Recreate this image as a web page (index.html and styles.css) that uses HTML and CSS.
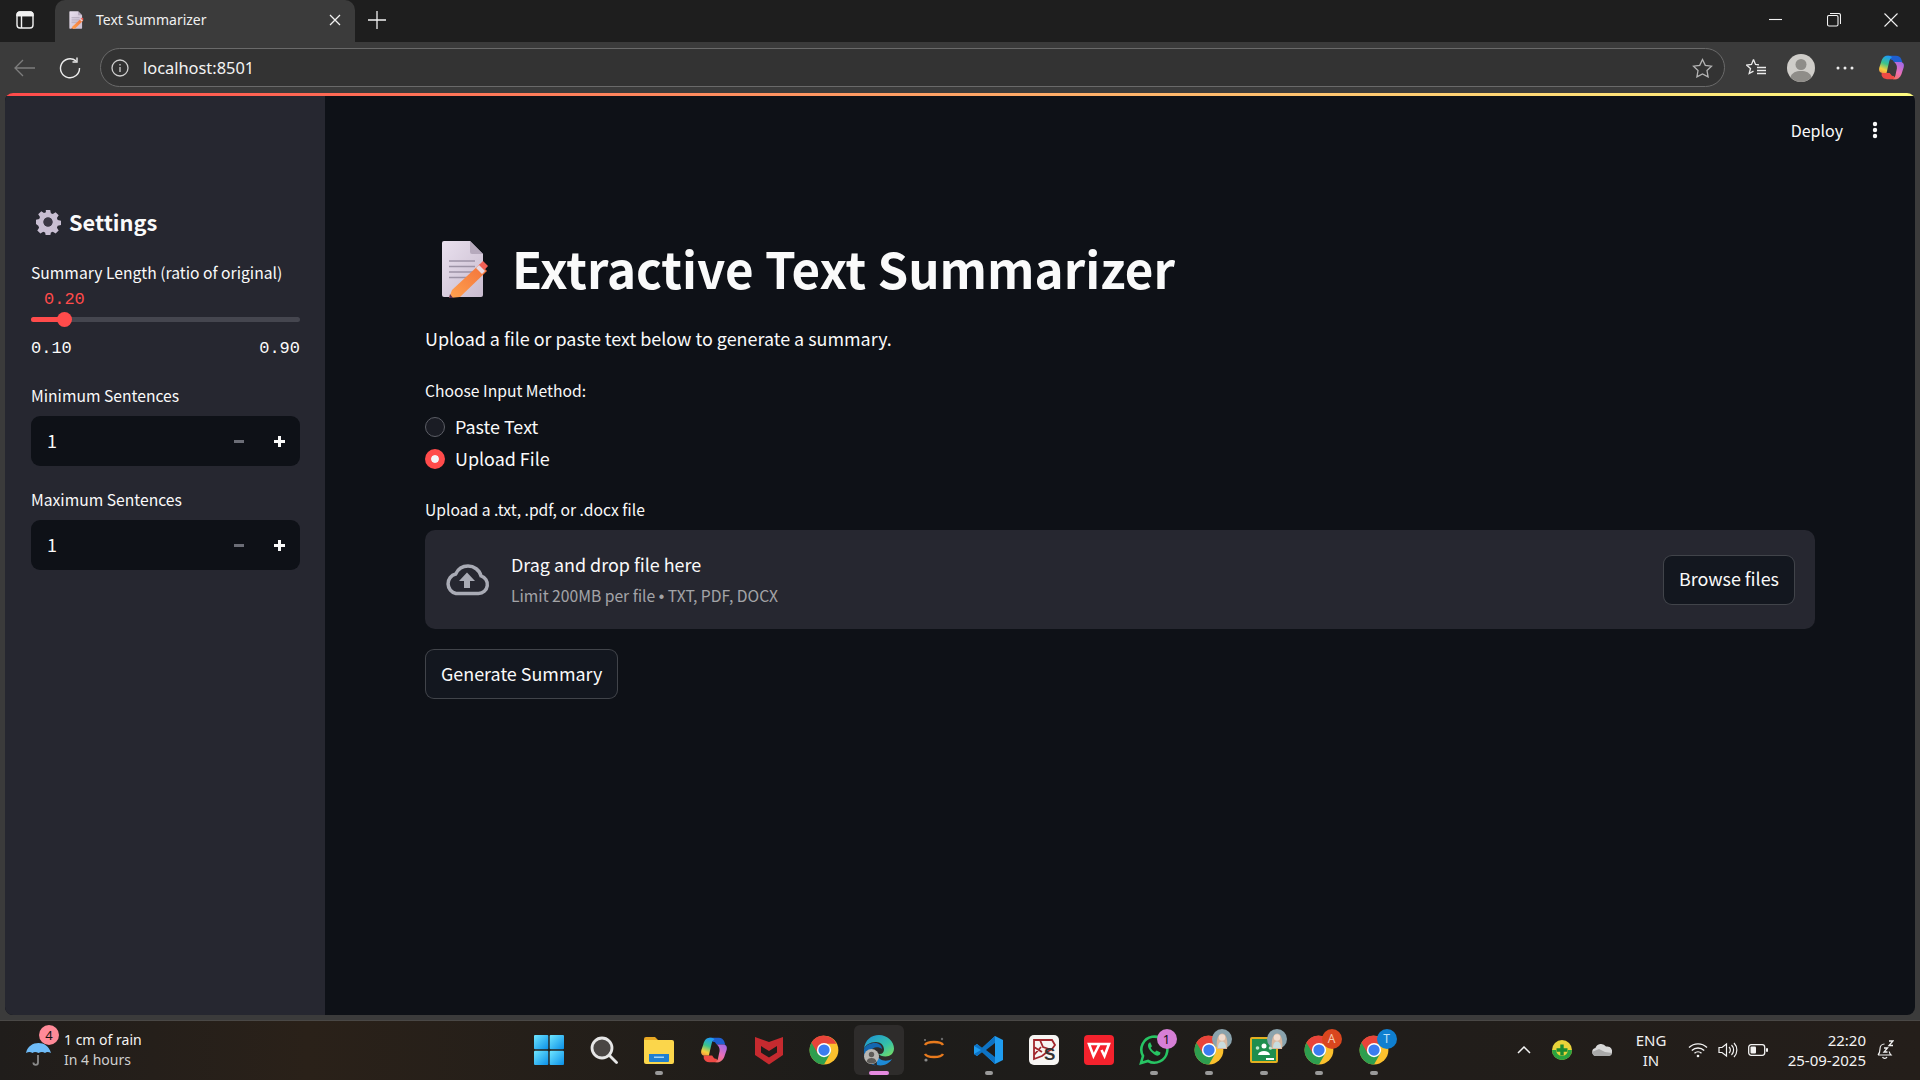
FILE: index.html
```html
<!DOCTYPE html>
<html lang="en">
<head>
<meta charset="utf-8">
<title>Text Summarizer</title>
<link rel="stylesheet" href="styles.css">
</head>
<body>
<svg class="defs" width="0" height="0" aria-hidden="true">
  <defs>
    <linearGradient id="paper" x1="0" y1="0" x2="1" y2="1"><stop offset="0" stop-color="#e9e0ee"/><stop offset="1" stop-color="#c9bccf"/></linearGradient>
    <linearGradient id="pencil" x1="0" y1="1" x2="1" y2="0"><stop offset="0" stop-color="#ffa24f"/><stop offset="1" stop-color="#f2703a"/></linearGradient>
    <linearGradient id="cop" x1=".6" y1="0" x2=".3" y2="1"><stop offset="0" stop-color="#1f9cf5"/><stop offset=".45" stop-color="#3cc48a"/><stop offset=".8" stop-color="#f6d03e"/><stop offset="1" stop-color="#f6a03e"/></linearGradient>
    <linearGradient id="cop2" x1=".7" y1="0" x2=".3" y2="1"><stop offset="0" stop-color="#a06ae8"/><stop offset=".6" stop-color="#ea70b8"/><stop offset="1" stop-color="#f2706a"/></linearGradient>
    <linearGradient id="win" x1="0" y1="0" x2="1" y2="1"><stop offset="0" stop-color="#6fe6ff"/><stop offset="1" stop-color="#0a8fe8"/></linearGradient>
    <linearGradient id="edge" x1="0" y1="0" x2="1" y2="1"><stop offset="0" stop-color="#1b8fd8"/><stop offset=".6" stop-color="#35c1a8"/><stop offset="1" stop-color="#7fe05a"/></linearGradient>
    <symbol id="doc" viewBox="0 0 48 58">
      <path d="M3 1h26l13 13v41a2 2 0 0 1-2 2H3a2 2 0 0 1-2-2V3a2 2 0 0 1 2-2z" fill="url(#paper)"/>
      <path d="M29 1l13 13H31a2 2 0 0 1-2-2z" fill="#b6aabd"/>
      <path d="M8 21h26M8 26.500h26M8 32h26M8 37.500h20" stroke="#9d93a6" stroke-width="1.600"/>
      <path d="M11 50l28-26 7 7-27 26-11 1z" fill="url(#pencil)"/>
      <path d="M37 26l5-5 5 5-4.500 5z" fill="#f25f55"/>
      <path d="M35 28l3-3 6 6-3 3z" fill="#e8d9e3"/>
      <path d="M9 54l3 4-4 .5z" fill="#5a2d50"/>
    </symbol>
    <symbol id="chrome" viewBox="0 0 24 24">
      <circle cx="12" cy="12" r="11.500" fill="#fbc02d"/>
      <path d="M12 12L2 6.200A11.500 11.500 0 0 0 12 23.500l5.700-9.900z" fill="#2e9e4f"/>
      <path d="M12 .5A11.500 11.500 0 0 0 2 6.200L7.200 15 12 7h10a11.500 11.500 0 0 0-10-6.500z" fill="#e8443a"/>
      <circle cx="12" cy="12" r="5.700" fill="#fff"/>
      <circle cx="12" cy="12" r="4.500" fill="#3b7cf0"/>
    </symbol>
    <symbol id="copilot" viewBox="0 0 30 30">
      <path d="M10 2h10c3 0 5 1.500 6 4l1 3h-9l-1-1c-.5-1-1.200-1.500-2.500-1.500z" fill="#1f5fd0"/>
      <path d="M4 21h9l1.500 2c.5 1 1.500 1.500 3 1.500l2.500 3.500h-10c-3 0-5-1.500-6-4z" fill="#ee4a45"/>
      <path d="M18 9h7c3 0 4.500 2.500 3.500 6l-2 6c-1 3.500-3.500 7-7 7h-3c2-1 2.500-3 3-5l1.500-7c.3-3-1-5.500-3-7z" fill="url(#cop2)"/>
      <path d="M10 2c2.500 0 4.500 .5 5.500 1.500-1.500.8-2.300 2.500-3 4.500L9.500 21H5c-3 0-4.500-2.500-3.500-6l2-6C4.500 5 7 2 10 2z" fill="url(#cop)"/>
    </symbol>
    <symbol id="photo" viewBox="0 0 20 20">
      <circle cx="10" cy="10" r="10" fill="#8aa3ad"/>
      <path d="M5 20c-1-6 0-15 5-15.500S16 14 15 20z" fill="#d9b8a0"/>
      <circle cx="10" cy="8.500" r="3.200" fill="#efdccf"/>
      <path d="M6 19c0-5 2-6.500 4-6.500s4 1.500 4 6.500z" fill="#c8dce0"/>
    </symbol>
  </defs>
</svg>

<div class="window">
  <div class="tabstrip">
    <button class="strip-btn" aria-label="Tabs">
      <svg width="18" height="18" viewBox="0 0 18 18" fill="none" stroke="#f2f2f2" stroke-width="1.400"><rect x="1" y="1" width="16" height="16" rx="3"/><path d="M1 4.500h16M5.500 4.500V17" /><path d="M1 4a3 3 0 0 1 3-3h10a3 3 0 0 1 3 3v.5H1z" fill="#f2f2f2"/></svg>
    </button>
    <div class="tab">
      <svg class="tab-fav" width="15" height="18"><use href="#doc"/></svg>
      <span class="tab-title">Text Summarizer</span>
      <svg class="tab-close" width="12" height="12" viewBox="0 0 12 12" stroke="#f2f2f2" stroke-width="1.300"><path d="M1 1l10 10M11 1L1 11"/></svg>
    </div>
    <svg class="newtab" width="18" height="18" viewBox="0 0 18 18" stroke="#f2f2f2" stroke-width="1.300"><path d="M9 0v18M0 9h18"/></svg>
    <div class="winctl">
      <svg width="14" height="14" viewBox="0 0 14 14" stroke="#f2f2f2" stroke-width="1.100"><path d="M0 6.500h13"/></svg>
      <svg width="14" height="14" viewBox="0 0 14 14" fill="none" stroke="#f2f2f2" stroke-width="1.100"><rect x=".5" y="2.500" width="10.500" height="10.500" rx="1.500"/><path d="M3 .5h8.500a2 2 0 0 1 2 2V11"/></svg>
      <svg width="14" height="14" viewBox="0 0 14 14" stroke="#f2f2f2" stroke-width="1.100"><path d="M.5.500l13 13M13.500.5l-13 13"/></svg>
    </div>
  </div>

  <div class="toolbar">
    <svg class="tb-back" width="22" height="18" viewBox="0 0 22 18" fill="none" stroke="#7d7d7d" stroke-width="1.300"><path d="M21 9H1M9 1L1 9l8 8"/></svg>
    <svg class="tb-reload" width="22" height="22" viewBox="0 0 22 22" fill="none" stroke="#ececec" stroke-width="1.400"><path d="M17 3.900A9.500 9.500 0 1 0 20.500 11"/><path d="M18 .5V5h-4.500"/></svg>
    <div class="address">
      <svg width="18" height="18" viewBox="0 0 18 18" fill="none" stroke="#d0d0d0" stroke-width="1.300"><circle cx="9" cy="9" r="8"/><path d="M9 8v5M9 5v1.400"/></svg>
      <span class="url">localhost:8501</span>
      <svg class="addr-star" width="21" height="20" viewBox="0 0 21 20" fill="none" stroke="#b4b4b4" stroke-width="1.300"><path d="M10.500 1.500l2.800 5.800 6.200.9-4.500 4.400 1.100 6.300-5.600-3-5.600 3 1.100-6.300-4.500-4.400 6.200-.9z"/></svg>
    </div>
    <div class="tb-right">
      <svg width="21" height="20" viewBox="0 0 21 20" fill="none" stroke="#ececec" stroke-width="1.300"><path d="M7.500 1.500l2 5 3.500.3M7.500 1.500l-2 5-5 .5 4 3.500-1.300 5 4.300-2.400"/><path d="M11 9.500h9M11 12.500h9M11 15.500h9"/></svg>
      <svg width="28" height="28" viewBox="0 0 28 28"><circle cx="14" cy="14" r="14" fill="#cfcdc9"/><circle cx="14" cy="10.500" r="5.500" fill="#8f8d89"/><path d="M3.500 23.200C5 18.500 9 17 14 17s9 1.500 10.500 6.200A14 14 0 0 1 3.500 23.200z" fill="#8f8d89"/></svg>
      <svg width="18" height="4" viewBox="0 0 18 4" fill="#ececec"><circle cx="2" cy="2" r="1.500"/><circle cx="9" cy="2" r="1.500"/><circle cx="16" cy="2" r="1.500"/></svg>
      <svg width="27" height="27"><use href="#copilot"/></svg>
    </div>
  </div>

  <div class="page">
    <div class="gradient-bar"></div>
    <div class="app">
      <aside class="sidebar">
        <h2 class="side-title">
          <svg width="26" height="26" viewBox="0 0 26 26"><path fill="#c9bfd3" fill-rule="evenodd" d="M10.800 1h4.400l.7 3.200 1.900.8 2.800-1.800 3.100 3.100-1.800 2.800.8 1.900 3.300.7v4.400l-3.300.7-.8 1.900 1.800 2.800-3.100 3.100-2.800-1.800-1.900.8-.7 3.300h-4.400l-.7-3.300-1.900-.8-2.800 1.800-3.100-3.100 1.800-2.800-.8-1.900L1 15.100v-4.400l3.200-.7.8-1.900-1.800-2.800 3.100-3.100L9 4l1.900-.8zM13 8.500a4.500 4.500 0 1 0 0 9 4.500 4.500 0 0 0 0-9z"/><circle cx="13" cy="13" r="4.500" fill="#3b3845"/></svg>
          <span>Settings</span>
        </h2>
        <div class="field slider-field">
          <label class="label">Summary Length (ratio of original)</label>
          <div class="slider-value">0.20</div>
          <div class="track"><div class="track-fill"></div><div class="thumb"></div></div>
          <div class="slider-ends"><span>0.10</span><span>0.90</span></div>
        </div>
        <div class="field">
          <label class="label">Minimum Sentences</label>
          <div class="number">
            <span class="num-val">1</span>
            <span class="num-minus"></span>
            <span class="num-plus"></span>
          </div>
        </div>
        <div class="field">
          <label class="label">Maximum Sentences</label>
          <div class="number">
            <span class="num-val">1</span>
            <span class="num-minus"></span>
            <span class="num-plus"></span>
          </div>
        </div>
      </aside>

      <main class="main">
        <header class="app-header">
          <span class="deploy">Deploy</span>
          <svg width="6" height="18" viewBox="0 0 6 18" fill="#fafafa"><circle cx="3" cy="3" r="2.200"/><circle cx="3" cy="9" r="2.200"/><circle cx="3" cy="15" r="2.200"/></svg>
        </header>
        <section class="content">
          <h1 class="title">
            <svg class="title-icon" width="50" height="58"><use href="#doc"/></svg>
            <span>Extractive Text Summarizer</span>
          </h1>
          <p class="intro">Upload a file or paste text below to generate a summary.</p>
          <div class="label radio-label">Choose Input Method:</div>
          <div class="radio-row"><span class="radio"></span><span>Paste Text</span></div>
          <div class="radio-row"><span class="radio radio-on"></span><span>Upload File</span></div>
          <div class="label upload-label">Upload a .txt, .pdf, or .docx file</div>
          <div class="dropzone">
            <svg class="cloud" width="46" height="32" viewBox="0 0 46 32" fill="none"><path d="M12 29.500h22.500a9 9 0 0 0 2.500-17.600C35.500 6 30 2 24 2c-5.500 0-10 3-12.300 8A10 10 0 0 0 12 29.500z" stroke="#a9abb5" stroke-width="3.500"/><path d="M23 8.500l8 8.500h-5v7h-6v-7h-5z" fill="#a9abb5"/></svg>
            <div class="drop-text">
              <div class="drop-main">Drag and drop file here</div>
              <div class="drop-sub">Limit 200MB per file <span class="bullet">•</span> TXT, PDF, DOCX</div>
            </div>
            <button class="btn">Browse files</button>
          </div>
          <button class="btn btn-generate">Generate Summary</button>
        </section>
      </main>
    </div>
  </div>

  <div class="taskbar">
    <div class="weather">
      <div class="umbrella">
        <svg width="25" height="24" viewBox="0 0 25 24"><path d="M12 13v7.500a2.300 2.300 0 0 1-4.600 0" fill="none" stroke="#8a8a8a" stroke-width="1.800"/><path d="M0 11C1.500 4 7 1 12.500 1S23 4 25 11c-2.500-1.500-4.500-1.500-6 0-2-1.500-4-1.500-6.500 0-2.500-1.500-4.500-1.500-6 0-2-1.500-4-1.500-6.500 0z" fill="#6fbcf8"/></svg>
        <span class="badge badge-pink">4</span>
      </div>
      <div class="weather-text">
        <div class="w1">1 cm of rain</div>
        <div class="w2">In 4 hours</div>
      </div>
    </div>

    <div class="apps">
      <div class="app-icon"><svg width="30" height="30" viewBox="0 0 30 30" fill="url(#win)"><rect x="0" y="0" width="14.300" height="14.300" rx="1"/><rect x="15.700" y="0" width="14.300" height="14.300" rx="1"/><rect x="0" y="15.700" width="14.300" height="14.300" rx="1"/><rect x="15.700" y="15.700" width="14.300" height="14.300" rx="1"/></svg></div>
      <div class="app-icon"><svg width="28" height="28" viewBox="0 0 28 28" fill="none"><circle cx="12" cy="12" r="10" stroke="#e6e6e6" stroke-width="2.800" fill="#4a4644"/><path d="M19.500 19.500l7 7" stroke="#e6e6e6" stroke-width="2.800" stroke-linecap="round"/></svg></div>
      <div class="app-icon run"><svg width="30" height="28" viewBox="0 0 30 28"><path d="M0 3a2 2 0 0 1 2-2h9l3 3h-14z" fill="#e8a823"/><path d="M0 4h28a2 2 0 0 1 2 2v20a2 2 0 0 1-2 2H2a2 2 0 0 1-2-2z" fill="#fbd64b"/><path d="M5 18h20v7a1 1 0 0 1-1 1H6a1 1 0 0 1-1-1z" fill="#1f7fd1"/><rect x="10" y="20.500" width="10" height="1.500" fill="#9fd3f5"/></svg></div>
      <div class="app-icon"><svg width="28" height="28"><use href="#copilot"/></svg></div>
      <div class="app-icon"><svg width="28" height="30" viewBox="0 0 28 30"><path d="M0 2l14 5 14-5v18l-14 9.500L0 20z" fill="#c62a2f"/><path d="M6 11l8 5 8-5v6.500l-8 5-8-5z" fill="#1f1c1a"/></svg></div>
      <div class="app-icon"><svg width="30" height="30"><use href="#chrome"/></svg></div>
      <div class="app-icon app-active">
        <svg width="32" height="32" viewBox="0 0 32 32"><path d="M1 15C2 6 8 1 16 1c8.500 0 15 6.500 15 13.500 0 5-4 8-8.500 8-3.500 0-6-1-6.500-2.500 3 .5 5-1.500 5-4.500C21 11 17.500 8 13 8 7 8 2.500 11 1 15z" fill="url(#edge)"/><path d="M1 15c2-4 6-6 11-6 4 0 7 2.500 7 6-4-3-10-2-12 3s0 11 6 13.500C6 31 0 24 1 15z" fill="#1367b0"/><path d="M14 31c6 1.500 12-1 15-6-3 2-9 2.500-12 0-2-1.500-3-4-3-4-1 4 0 8 0 10z" fill="#1d8ad6"/></svg>
        <svg class="edge-user" width="15" height="15" viewBox="0 0 15 15"><circle cx="7.500" cy="7.500" r="7.500" fill="#b8b6b2"/><circle cx="7.500" cy="5.500" r="2.700" fill="#5e5c59"/><path d="M2.500 12.500c.7-2.500 2.500-3.500 5-3.500s4.300 1 5 3.500a7.500 7.500 0 0 1-10 0z" fill="#5e5c59"/></svg>
      </div>
      <div class="app-icon"><svg width="24" height="28" viewBox="0 0 24 28" fill="none"><path d="M3 9c2-4 16-4 18 0M3 18c2 4 16 4 18 0" stroke="#e87a1d" stroke-width="2.400"/><circle cx="4" cy="24" r="1.600" fill="#8a8a8a"/><circle cx="20" cy="3" r="1.200" fill="#6a6a6a"/><circle cx="3" cy="4" r=".9" fill="#8a8a8a"/></svg></div>
      <div class="app-icon run"><svg width="30" height="30" viewBox="0 0 30 30"><path d="M21 1l8 4v20l-8 4L8 17l-5 4-3-2V11l3-2 5 4z" fill="#1f9cf0"/><path d="M21 1v28L8 17 3 21l-3-2 7-4-7-4 3-2 5 4z" fill="#0d72c4"/><path d="M21 8v14l-9-7z" fill="#1f1c1a"/></svg></div>
      <div class="app-icon"><svg width="30" height="30" viewBox="0 0 30 30"><rect width="30" height="30" rx="5" fill="#f7f5f3"/><path d="M5 5h18l3 5-3 4-5 3-5 4-8 3zM5 12l8 5M11 5l3 7 6 2M5 20l7-8" fill="none" stroke="#a2262c" stroke-width="1.800"/><text class="ks" x="15" y="25">S</text></svg></div>
      <div class="app-icon"><svg width="30" height="30" viewBox="0 0 30 30"><rect width="30" height="30" rx="4" fill="#f4222d"/><path d="M5 9l4.500 12 3-6 3-6H5zM14 9h11l-4.500 12-3-6" fill="none" stroke="#fff" stroke-width="2.600"/></svg></div>
      <div class="app-icon run">
        <svg width="30" height="30" viewBox="0 0 30 30" fill="none"><path d="M2 28l2-7A13 13 0 1 1 9 26z" stroke="#27c463" stroke-width="2.600"/><path d="M10 8c-2 2-1 6 3 9.500s6 4 8 2l.5-2-4-2-1.500 1.500c-2-.8-3.500-2.500-4.300-4.300l1.300-1.400-1.800-4z" fill="#27c463"/></svg>
        <span class="badge badge-purple">1</span>
      </div>
      <div class="app-icon run">
        <svg width="30" height="30"><use href="#chrome"/></svg>
        <svg class="corner-photo" width="20" height="20"><use href="#photo"/></svg>
      </div>
      <div class="app-icon run">
        <svg width="28" height="26" viewBox="0 0 28 26"><rect x="1" y="1" width="26" height="24" rx="1" fill="#1e8e4e" stroke="#e3b021" stroke-width="2"/><circle cx="14" cy="9" r="2.500" fill="#fff"/><circle cx="7.500" cy="11" r="1.800" fill="#bfe5cc"/><circle cx="20.500" cy="11" r="1.800" fill="#bfe5cc"/><path d="M8 18c.5-3 3-4 6-4s5.500 1 6 4z" fill="#fff"/><rect x="16" y="21" width="8" height="2" fill="#fff"/></svg>
        <svg class="corner-photo" width="20" height="20"><use href="#photo"/></svg>
      </div>
      <div class="app-icon run">
        <svg width="30" height="30"><use href="#chrome"/></svg>
        <span class="badge badge-orange">A</span>
      </div>
      <div class="app-icon run">
        <svg width="30" height="30"><use href="#chrome"/></svg>
        <span class="badge badge-blue">T</span>
      </div>
    </div>

    <div class="tray">
      <svg class="tray-chev" width="14" height="8" viewBox="0 0 14 8" fill="none" stroke="#f2f2f2" stroke-width="1.500"><path d="M1 7l6-6 6 6"/></svg>
      <svg class="tray-green" width="20" height="20" viewBox="0 0 20 20"><circle cx="10" cy="10" r="10" fill="#e8d33a"/><path d="M10 20a10 10 0 0 0 10-10h-4a6 6 0 0 1-12 0H0a10 10 0 0 0 10 10z" fill="#2aa33f"/><path d="M8.300 4.500h3.400v3.800h3.800v3.400h-3.800v3.800H8.300v-3.800H4.500V8.300h3.800z" fill="#1a8a30"/></svg>
      <svg class="tray-cloud" width="20" height="13" viewBox="0 0 20 13"><path d="M4 13a4 4 0 0 1-.6-7.900A6 6 0 0 1 14 3.600 4.600 4.600 0 0 1 16.500 13z" fill="#d7d7d7"/><path d="M0 9l7-3 6 3 7 1c0 2-1.500 3-3.500 3H4C2 13 .5 11.500 0 9z" fill="#a9a9a9"/></svg>
      <div class="lang"><div>ENG</div><div>IN</div></div>
      <svg class="tray-wifi" width="20" height="16" viewBox="0 0 20 16" fill="none" stroke="#f2f2f2" stroke-width="1.400"><path d="M1 5.500a13 13 0 0 1 18 0M3.800 8.500a9 9 0 0 1 12.400 0M6.500 11.300a5 5 0 0 1 7 0"/><circle cx="10" cy="14" r="1.300" fill="#f2f2f2" stroke="none"/></svg>
      <svg class="tray-vol" width="20" height="16" viewBox="0 0 20 16" fill="none" stroke="#f2f2f2" stroke-width="1.200"><path d="M1 5.500h3L8.500 2v12L4 10.500H1z"/><path d="M11 5a4 4 0 0 1 0 6M13.500 3a7 7 0 0 1 0 10M16 1a10 10 0 0 1 0 14"/></svg>
      <svg class="tray-bat" width="20" height="12" viewBox="0 0 20 12"><rect x=".7" y=".7" width="16" height="10.600" rx="2.500" fill="none" stroke="#f2f2f2" stroke-width="1.300"/><rect x="2.500" y="2.500" width="5.500" height="7" rx="1" fill="#f2f2f2"/><rect x="18" y="4" width="2" height="4" rx="1" fill="#f2f2f2"/></svg>
      <div class="clock"><div>22:20</div><div>25-09-2025</div></div>
      <svg class="tray-bell" width="17" height="20" viewBox="0 0 17 20" fill="none" stroke="#f2f2f2" stroke-width="1.200"><path d="M1 15c2-2 2-3 2-6s2-5 4.500-5M1 15h13c-1-1-1.500-2-1.800-3.500M5.500 17a2.500 2.500 0 0 0 4.500 0"/><path d="M7 8h3.500L7 12h3.500M12 1h4l-4 4.500h4" stroke-width="1.300"/></svg>
    </div>
  </div>
</div>
</body>
</html>
```

FILE: styles.css
```css
* { box-sizing: border-box; }
html, body { margin: 0; height: 100%; }
body { background: #3b3b3b; overflow: hidden; font-family: "Noto Sans", "Open Sans", sans-serif; }
.defs { position: absolute; }
svg { display: block; flex: none; }

.window { display: flex; flex-direction: column; height: 1080px; width: 1920px; }

/* tab strip */
.tabstrip { height: 42px; flex: none; display: flex; align-items: center; background: #1e1e1e; }
.strip-btn { width: 55px; height: 42px; border: 0; padding: 0 0 2px 16px; background: none; display: flex; align-items: center; }
.tab { width: 300px; height: 42px; background: #3b3b3b; border-radius: 10px 10px 0 0; display: flex; align-items: center; padding: 0 14px 3px; }
.tab-fav { margin-right: 12px; }
.tab-title { flex: 1; font-size: 14px; color: #f0f0f0; }
.newtab { margin: -3px 0 0 13px; }
.winctl { margin: -2px 0 0 auto; display: flex; gap: 43.500px; padding-right: 22px; }

/* toolbar */
.toolbar { height: 51px; flex: none; display: flex; align-items: center; background: #3b3b3b; padding: 0 0 0 14px; }
.tb-reload { margin-left: 23px; }
.address { margin-left: 19px; width: 1625px; height: 39px; border: 1px solid #6a6a6a; border-radius: 20px; background: #333; display: flex; align-items: center; padding: 0 11px 0 10px; }
.url { flex: 1; margin-left: 14px; font-size: 16.400px; color: #f4f4f4; }
.tb-right { display: flex; align-items: center; gap: 0; margin-left: 21px; }
.tb-right svg:nth-child(2) { margin-left: 20px; }
.tb-right svg:nth-child(3) { margin-left: 21px; }
.tb-right svg:nth-child(4) { margin-left: 24px; }

/* page */
.page { flex: 1; min-height: 0; margin: 0 5px; display: flex; flex-direction: column; border-radius: 8px; overflow: hidden; background: #0e1117; color: #fafafa; font-family: "Noto Sans CJK SC", "Noto Sans", sans-serif; }
.gradient-bar { height: 3px; flex: none; background: linear-gradient(90deg, #ff4b4b, #fffd80); }
.app { flex: 1; min-height: 0; display: flex; }

/* sidebar */
.sidebar { width: 320px; flex: none; background: #262730; padding: 108px 25px 0 26px; }
.side-title { margin: 0; display: flex; align-items: center; gap: 8px; font-size: 21.800px; font-weight: 600; line-height: 36px; height: 36px; padding-left: 4px; }
.label { font-size: 15.680px; line-height: 24px; }
.slider-field { margin-top: 20px; }
.field { display: block; }
.slider-value { font-family: "Liberation Mono", monospace; font-size: 17px; line-height: 20px; color: #ff4b4b; padding-left: 13px; margin-top: 5px; }
.track { position: relative; height: 5px; margin-top: 7px; background: #45464f; border-radius: 3px; }
.track-fill { width: 34px; height: 5px; background: #ff4b4b; border-radius: 3px 0 0 3px; }
.thumb { position: absolute; left: 26px; top: -5px; width: 15px; height: 15px; border-radius: 50%; background: #ff4b4b; }
.slider-ends { display: flex; justify-content: space-between; font-family: "Liberation Mono", monospace; font-size: 17px; line-height: 20px; margin-top: 17px; }
.field + .field { margin-top: 21px; }
.slider-field + .field { margin-top: 24px; }
.number { display: flex; align-items: center; height: 50px; margin-top: 8px; border-radius: 9px; background: #0e1117; padding: 0 15px 2px 16px; position: relative; }
.num-val { flex: 1; font-size: 18px; }
.num-minus { width: 10px; height: 3px; background: #6b6d76; margin-right: 30px; margin-top: 2px; }
.num-plus { width: 11px; height: 11px; margin-top: 2px; background: linear-gradient(#fafafa, #fafafa) center / 11px 3px no-repeat, linear-gradient(#fafafa, #fafafa) center / 3px 11px no-repeat; }

/* main */
.main { flex: 1; min-width: 0; display: flex; flex-direction: column; }
.app-header { height: 68px; flex: none; display: flex; align-items: center; justify-content: flex-end; gap: 29px; padding: 0 37px 0 0; }
.deploy { font-size: 16px; }
.content { padding: 69px 100px 0 100px; }
.title { margin: 0; display: flex; align-items: center; gap: 22px; font-size: 49.280px; font-weight: 700; line-height: 70px; height: 70px; padding-left: 15px; }
.title-icon { margin-top: 2px; }
.intro { margin: 21px 0 0; font-size: 17.920px; line-height: 28px; }
.radio-label { margin-top: 27px; }
.radio-row { display: flex; align-items: center; gap: 10px; height: 32px; font-size: 17.920px; }
.radio-label + .radio-row { margin-top: 7px; }
.radio { width: 20px; height: 20px; margin-top: 2px; border-radius: 50%; border: 1px solid #5c5e66; background: #1a1c24; }
.radio-on { background: #ff4b4b; border: 6px solid #ff4b4b; box-shadow: inset 0 0 0 8px #f4f4f8; }
.upload-label { margin-top: 24px; }
.dropzone { display: flex; align-items: center; height: 99px; margin-top: 8px; padding: 0 20px 0 19px; border-radius: 10px; background: #262730; }
.drop-text { flex: 1; margin-left: 21px; padding-bottom: 1px; }
.drop-main { font-size: 17.920px; line-height: 28px; }
.drop-sub { font-size: 15.680px; line-height: 22px; margin-top: 7px; color: rgba(250, 250, 250, .6); }
.bullet { font-family: "Liberation Sans", sans-serif; }
.btn { height: 50px; padding: 0 15px 3px; border: 1px solid rgba(250, 250, 250, .2); border-radius: 9px; background: #13171f; color: #fafafa; font-family: inherit; font-size: 17.920px; }
.btn-generate { margin-top: 20px; }

/* taskbar */
.taskbar { height: 60px; margin-top: 5px; flex: none; display: grid; grid-template-columns: 1fr auto 1fr; align-items: center; background: linear-gradient(90deg, #201d1b, #2a2119 16%, #1d1c1a 45%, #241e1a); border-top: 1px solid #4a4846; color: #f4f4f4; }
.weather { display: flex; align-items: center; padding: 0 0 2px 26px; }
.umbrella { position: relative; padding-top: 6px; }
.umbrella > svg { margin-top: 2px; }
.weather-text { margin-left: 13px; font-size: 14px; line-height: 20px; }
.w2 { color: #cfcfcf; }
.badge { position: absolute; width: 20px; height: 20px; border-radius: 50%; display: flex; align-items: center; justify-content: center; font-size: 13px; color: #111; }
.badge-pink { left: 13px; top: -9px; background: #ff8a98; }
.badge-purple { right: 5px; top: 4px; background: #d67fd6; }
.badge-orange { right: 5px; top: 4px; background: #d9461e; color: #f6c9b0; font-size: 12px; }
.badge-blue { right: 5px; top: 4px; background: #0f7fd0; color: #bde0f7; font-size: 12px; }
.apps { display: flex; justify-content: center; padding: 0 0 2px 3px; }
.app-icon { position: relative; width: 55px; height: 50px; display: flex; align-items: center; justify-content: center; border-radius: 6px; }
.app-icon.run::after, .app-active::after { content: ""; position: absolute; left: 50%; bottom: 0; width: 8px; height: 4px; margin-left: -4px; border-radius: 2px; background: #9a9a9a; }
.app-active { background: #2e2c2b; width: 50px; margin: 0 2.500px; }
.app-active::after { width: 20px; margin-left: -10px; background: #e58ae0; }
.edge-user { position: absolute; left: 10px; top: 24px; }
.corner-photo { position: absolute; right: 5px; top: 4px; }
.ks { font-family: "Liberation Sans", sans-serif; font-size: 17px; font-weight: 700; fill: #333; }
.tray { display: flex; align-items: center; justify-content: flex-end; padding: 0 26px 2px 0; }
.tray-green { margin-left: 21px; }
.tray-cloud { margin-left: 20px; }
.lang { margin-left: 9px; text-align: center; font-size: 15px; line-height: 20px; width: 60px; color: #f0f0f0; }
.tray-wifi { margin-left: 7px; }
.tray-vol { margin-left: 10px; }
.tray-bat { margin-left: 10px; }
.clock { margin-left: 10px; text-align: right; font-size: 15px; line-height: 20px; width: 88px; }
.tray-bell { margin-left: 11px; }
```
